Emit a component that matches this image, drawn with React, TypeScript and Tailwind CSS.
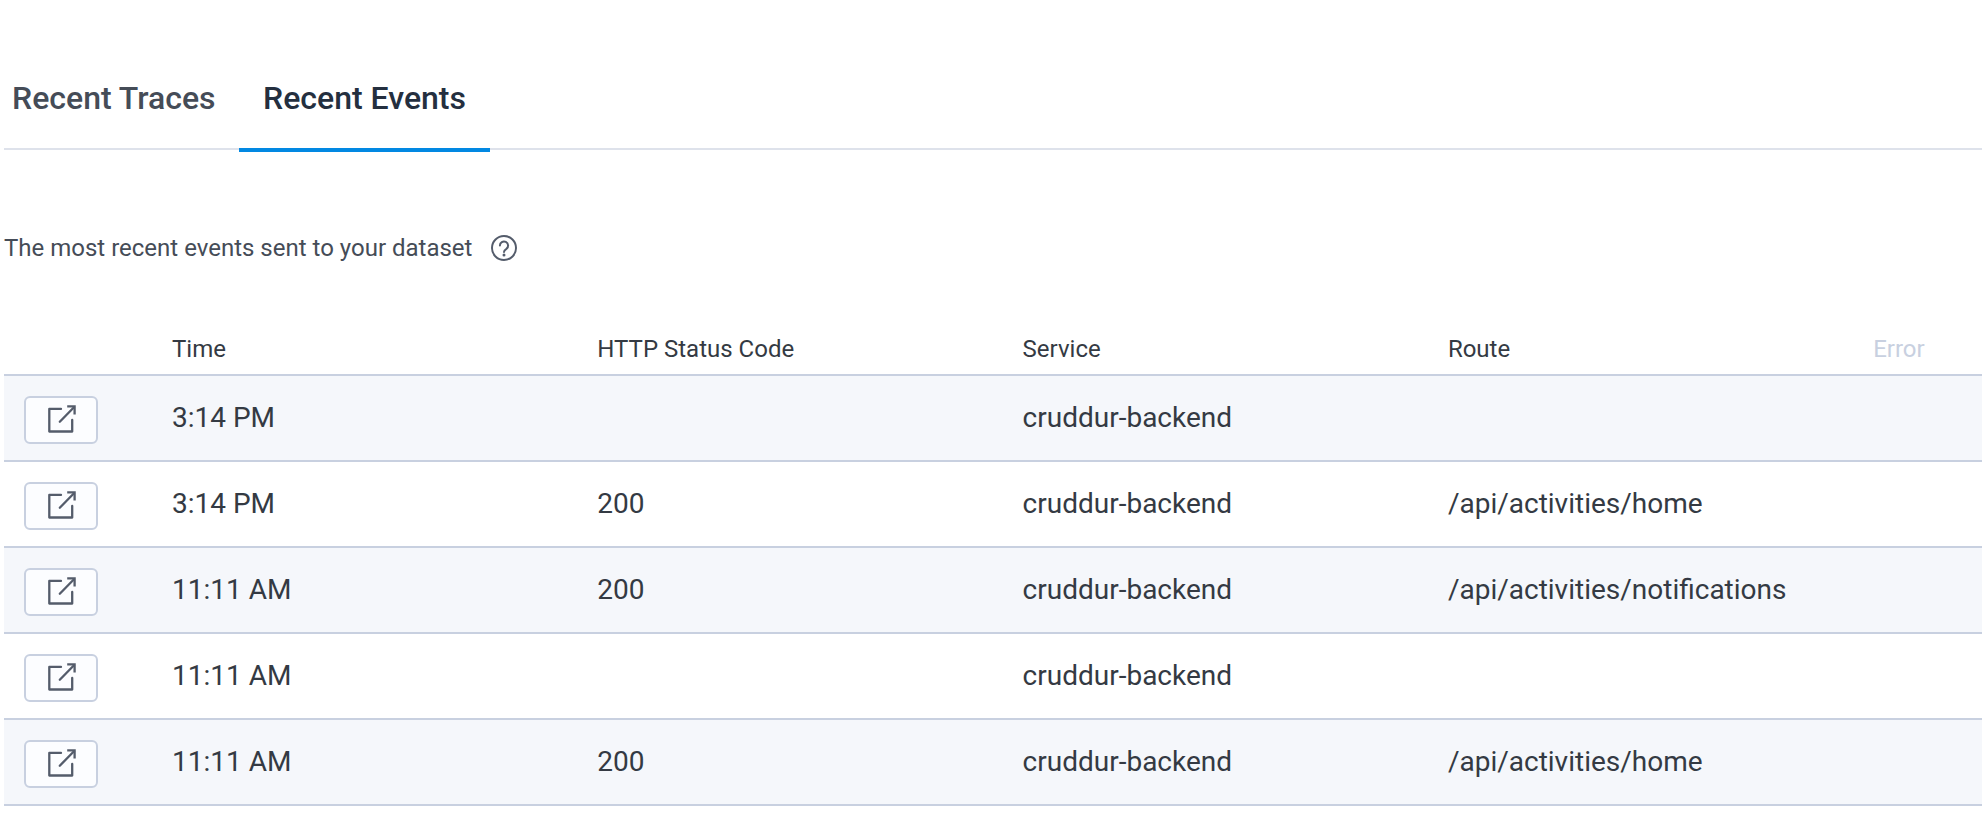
type EventRow = { time: string; status?: string; service: string; route?: string };

const rows: EventRow[] = [
  { time: "3:14 PM", service: "cruddur-backend" },
  { time: "3:14 PM", status: "200", service: "cruddur-backend", route: "/api/activities/home" },
  { time: "11:11 AM", status: "200", service: "cruddur-backend", route: "/api/activities/notifications" },
  { time: "11:11 AM", service: "cruddur-backend" },
  { time: "11:11 AM", status: "200", service: "cruddur-backend", route: "/api/activities/home" },
];

const columns = "grid grid-cols-[168px_repeat(4,425.3px)_1fr]";

function HelpIcon() {
  return (
    <svg width="28" height="28" viewBox="0 0 28 28" fill="none" stroke="#545c6b" strokeWidth="2">
      <circle cx="14" cy="14" r="12" />
      <path d="M9.9 11.6a4.1 4.1 0 1 1 6.5 3.3c-1.5 1-2.4 1.6-2.4 3" strokeLinecap="round" />
      <circle cx="14" cy="20.9" r="1.5" fill="#545c6b" stroke="none" />
    </svg>
  );
}

function OpenIcon() {
  return (
    <svg
      width="30"
      height="30"
      viewBox="0 0 30 30"
      fill="none"
      stroke="#545c6b"
      strokeWidth="2.3"
      strokeLinejoin="round"
      strokeLinecap="round"
    >
      <path d="M15 3.9H3.3v22.6h22.9V15" />
      <path d="M13.8 16.7 28 2.2" />
      <path d="M21.2 1.4h7.4v8" strokeLinejoin="miter" strokeLinecap="butt" />
    </svg>
  );
}

export default function App() {
  return (
    <main className="h-[840px] overflow-hidden bg-white pl-1 font-['Roboto',sans-serif] text-[#343a43]">
      <nav className="flex h-[150px] items-end border-b-2 border-[#dee2eb] text-[32px] leading-10 font-medium">
        <button className="w-[235px] pb-[30px] pl-2 text-left whitespace-nowrap text-[#454c57]">Recent Traces</button>
        <button className="-mb-1 w-[251px] border-b-4 border-[#0288e2] pb-[30px] pl-6 text-left whitespace-nowrap text-[#242f3f]">
          Recent Events
        </button>
      </nav>
      <div className="mt-[82px] flex h-8 items-center text-[24px] leading-8 text-[#454c57]">
        <p className="w-[486px] whitespace-nowrap">The most recent events sent to your dataset</p>
        <HelpIcon />
      </div>
      <section className="mt-[67px]">
        <div className={`${columns} h-[45px] border-b-2 border-[#c8d0e0] text-[24px] leading-9`}>
          <span />
          <span>Time</span>
          <span>HTTP Status Code</span>
          <span>Service</span>
          <span>Route</span>
          <span className="text-[#c8d0e0]">Error</span>
        </div>
        {rows.map((row, i) => (
          <div
            key={i}
            className={`${columns} h-[86px] items-center border-b-2 border-[#c8d0e0] text-[28px] leading-9 odd:bg-white even:bg-[#f5f7fb]`}
          >
            <span className="pt-1 pl-5">
              <button className="flex h-12 w-[74px] items-center justify-center rounded-md border-2 border-[#c8d0e0] bg-[#fcfdff]">
                <OpenIcon />
              </button>
            </span>
            <span>{row.time}</span>
            <span>{row.status}</span>
            <span>{row.service}</span>
            <span>{row.route}</span>
          </div>
        ))}
      </section>
    </main>
  );
}
